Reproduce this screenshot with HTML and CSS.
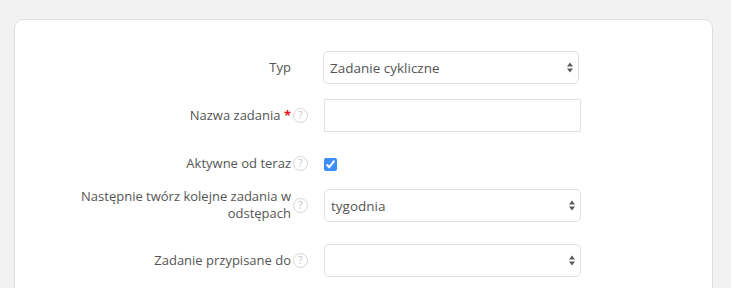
FILE: index.html
```html
<!DOCTYPE html>
<html lang="pl">
  <head>
    <meta charset="UTF-8" />
    <meta name="viewport" content="width=device-width, initial-scale=1.0" />
    <title>Zadanie</title>
    <link rel="stylesheet" href="styles.css">
  </head>
  <body>
    <div id="wrap">
      <form class="task_form">
        <div class="row row_first">
          <label class="title" for="typ">Typ</label>
          <span class="help_space"></span>
          <div class="select_box">
            <select id="typ" class="field">
              <option>Zadanie cykliczne</option>
            </select>
            <svg class="arrows" width="6" height="11" viewBox="0 0 6 11"><path d="M0 4.5L3 0.5L6 4.5Z M0 6.5L6 6.5L3 10.5Z" fill="#5a5a5a"/></svg>
          </div>
        </div>

        <div class="row">
          <label class="title" for="nazwa">Nazwa zadania <span class="req">*</span></label>
          <span class="help">?</span>
          <input type="text" id="nazwa" class="field field_text" />
        </div>

        <div class="row row_check">
          <label class="title" for="aktywne">Aktywne od teraz</label>
          <span class="help">?</span>
          <div class="check_box">
            <input type="checkbox" id="aktywne" checked />
          </div>
        </div>

        <div class="row row_tall">
          <label class="title" for="odstep">Następnie twórz kolejne zadania w odstępach</label>
          <span class="help">?</span>
          <div class="select_box">
            <select id="odstep" class="field">
              <option>tygodnia</option>
            </select>
            <svg class="arrows" width="6" height="11" viewBox="0 0 6 11"><path d="M0 4.5L3 0.5L6 4.5Z M0 6.5L6 6.5L3 10.5Z" fill="#5a5a5a"/></svg>
          </div>
        </div>

        <div class="row">
          <label class="title" for="osoba">Zadanie przypisane do</label>
          <span class="help">?</span>
          <div class="select_box">
            <select id="osoba" class="field">
              <option></option>
            </select>
            <svg class="arrows" width="6" height="11" viewBox="0 0 6 11"><path d="M0 4.5L3 0.5L6 4.5Z M0 6.5L6 6.5L3 10.5Z" fill="#5a5a5a"/></svg>
          </div>
        </div>
      </form>
    </div>
  </body>
</html>
```

FILE: styles.css
```css
* {
  margin: 0;
  padding: 0;
  box-sizing: border-box;
}

body {
  background-color: #f2f2f2;
  font-family: "Open Sans", "Liberation Sans", sans-serif;
  color: #555;
  padding: 19px 18px 0 14px;
}

#wrap {
  background-color: #fff;
  border: 1px solid #dedede;
  border-radius: 9px;
  padding: 31px 0 40px 45px;
}

.row {
  display: flex;
  align-items: center;
  margin-bottom: 15px;
}

.row .title {
  width: 231px;
  font-size: 13px;
  line-height: 17px;
  text-align: right;
  color: #555;
}

.row .req {
  color: #e8101a;
  font-weight: 700;
}

.help,
.help_space {
  width: 15px;
  height: 15px;
  margin-left: 2px;
  margin-right: 16px;
  flex-shrink: 0;
}

.help {
  border: 1px solid #d6d6d6;
  border-radius: 50%;
  color: #c2c2c2;
  font-size: 10px;
  line-height: 13px;
  text-align: center;
}

.select_box {
  position: relative;
  width: 257px;
}

.field {
  display: block;
  width: 257px;
  height: 33px;
  border: 1px solid #e0e0e0;
  border-radius: 5px;
  background-color: #fff;
  font-family: inherit;
  font-size: 13.5px;
  color: #555;
  padding: 0 20px 0 6px;
  appearance: none;
  outline: none;
}

.field_text {
  border-radius: 1px;
}

.arrows {
  position: absolute;
  right: 6px;
  top: 11px;
}

.row_first .select_box {
  margin-left: -1px;
  width: 256px;
}

.row_first .field {
  width: 256px;
}

.row_check {
  height: 33px;
  margin-bottom: 9px;
}

.check_box {
  height: 13px;
  padding-top: 1px;
}

.check_box input {
  display: block;
  width: 13px;
  height: 13px;
  accent-color: #3b8ef5;
}

.row_tall {
  min-height: 40px;
  align-items: flex-start;
}

.row_tall .title {
  margin-top: -1px;
}

.row_tall .help {
  margin-top: 9px;
}
```
